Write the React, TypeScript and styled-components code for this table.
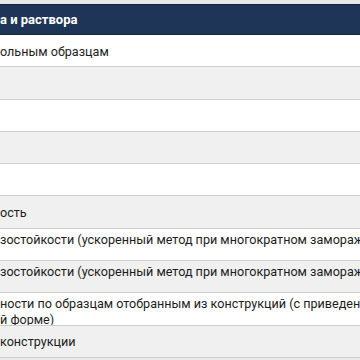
import styled, { createGlobalStyle } from "styled-components";

const GlobalStyle = createGlobalStyle`
  html, body {
    margin: 0;
    padding: 0;
    background: #ffffff;
  }
  body {
    font-family: Roboto, "Liberation Sans", Arial, sans-serif;
  }
`;

const Viewport = styled.div`
  width: 360px;
  height: 360px;
  overflow: hidden;
  background: #e8e8ea;
  padding-top: 4px;
  box-sizing: border-box;
`;

const Table = styled.div`
  display: flex;
  flex-direction: column;
  width: 100%;
`;

const HeaderRow = styled.div`
  display: flex;
  align-items: center;
  height: 31px;
  box-sizing: border-box;
  background: #1f3557;
  border-top: 1px solid #16243c;
  border-bottom: 1px solid #16243c;
  color: #ffffff;
  font-size: 13px;
  font-weight: 700;
  white-space: nowrap;
`;

const Row = styled.div<{ $striped?: boolean; $wrapped?: boolean }>`
  display: flex;
  align-items: ${(p) => (p.$wrapped ? "flex-start" : "center")};
  padding-top: ${(p) => (p.$wrapped ? "3px" : "0")};
  height: 32.3px;
  box-sizing: border-box;
  background: ${(p) => (p.$striped ? "#f0f0f0" : "#ffffff")};
  border-bottom: 1.3px solid #cfcfcf;
  overflow: hidden;
`;

const CellText = styled.div<{ $lines?: number }>`
  font-size: 12.6px;
  line-height: 16px;
  color: #1c1c1c;
  white-space: pre;
  margin-top: ${(p) => ((p.$lines ?? 1) > 1 ? "0" : "2px")};
  height: ${(p) => (p.$lines ?? 1) * 16}px;
`;

type Item = { text: string; lines?: number };

const rows: Item[] = [
  { text: "ольным образцам" },
  { text: "" },
  { text: "" },
  { text: "" },
  { text: "" },
  { text: "ость" },
  { text: "зостойкости (ускоренный метод при многократном заморажи", lines: 2 },
  { text: "зостойкости (ускоренный метод при многократном заморажи", lines: 2 },
  { text: "ности по образцам отобранным из конструкций (с приведени\nй форме)", lines: 2 },
  { text: "конструкции" },
];

export default function App() {
  return (
    <>
      <GlobalStyle />
      <Viewport>
        <Table>
          <HeaderRow>а и раствора</HeaderRow>
          {rows.map((r, i) => (
            <Row key={i} $striped={i % 2 === 1} $wrapped={(r.lines ?? 1) > 1}>
              <CellText $lines={r.lines}>{r.text}</CellText>
            </Row>
          ))}
        </Table>
      </Viewport>
    </>
  );
}
